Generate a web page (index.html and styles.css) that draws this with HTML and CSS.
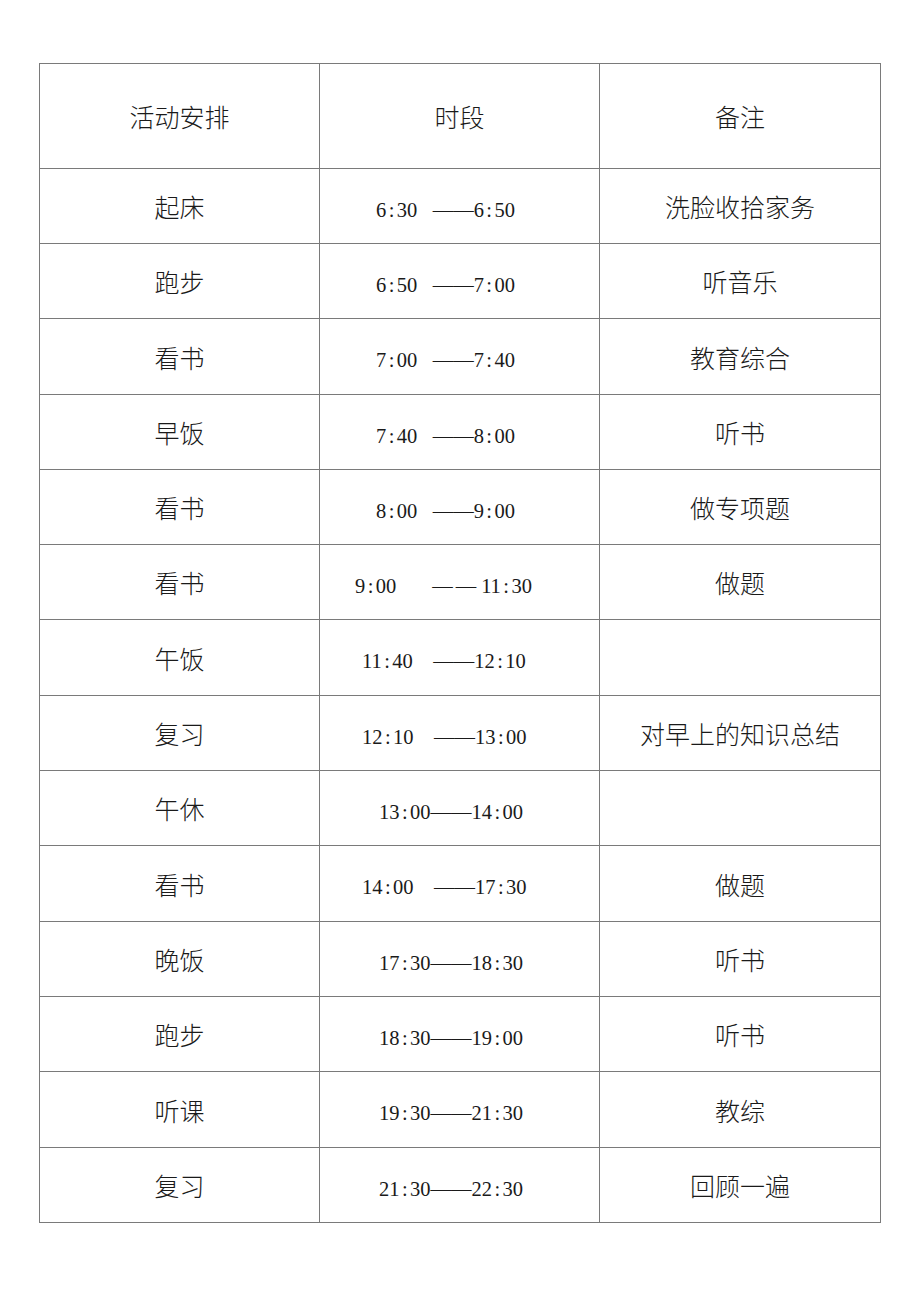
FILE: index.html
```html
<!DOCTYPE html>
<html lang="zh-CN">
<head>
<meta charset="utf-8">
<title>活动安排</title>
<link rel="stylesheet" href="styles.css">
</head>
<body>
<div class="sheet">
  <div class="cell head">活动安排</div>
  <div class="cell head">时段</div>
  <div class="cell head">备注</div>

  <div class="cell">起床</div>
  <div class="cell time pa">6<span class="c">:</span>30   ——6<span class="c">:</span>50</div>
  <div class="cell">洗脸收拾家务</div>

  <div class="cell">跑步</div>
  <div class="cell time pa">6<span class="c">:</span>50   ——7<span class="c">:</span>00</div>
  <div class="cell">听音乐</div>

  <div class="cell">看书</div>
  <div class="cell time pa">7<span class="c">:</span>00   ——7<span class="c">:</span>40</div>
  <div class="cell">教育综合</div>

  <div class="cell">早饭</div>
  <div class="cell time pa">7<span class="c">:</span>40   ——8<span class="c">:</span>00</div>
  <div class="cell">听书</div>

  <div class="cell">看书</div>
  <div class="cell time pa">8<span class="c">:</span>00   ——9<span class="c">:</span>00</div>
  <div class="cell">做专项题</div>

  <div class="cell">看书</div>
  <div class="cell time pd">9<span class="c">:</span>00       <span class="fw">——</span><span class="low">11<span class="c">:</span>30</span></div>
  <div class="cell">做题</div>

  <div class="cell">午饭</div>
  <div class="cell time pb">11<span class="c">:</span>40    ——12<span class="c">:</span>10</div>
  <div class="cell"></div>

  <div class="cell">复习</div>
  <div class="cell time pb">12<span class="c">:</span>10    ——13<span class="c">:</span>00</div>
  <div class="cell">对早上的知识总结</div>

  <div class="cell">午休</div>
  <div class="cell time pc">13<span class="c">:</span>00——14<span class="c">:</span>00</div>
  <div class="cell"></div>

  <div class="cell">看书</div>
  <div class="cell time pb">14<span class="c">:</span>00    ——17<span class="c">:</span>30</div>
  <div class="cell">做题</div>

  <div class="cell">晚饭</div>
  <div class="cell time pc">17<span class="c">:</span>30——18<span class="c">:</span>30</div>
  <div class="cell">听书</div>

  <div class="cell">跑步</div>
  <div class="cell time pc">18<span class="c">:</span>30——19<span class="c">:</span>00</div>
  <div class="cell">听书</div>

  <div class="cell">听课</div>
  <div class="cell time pc">19<span class="c">:</span>30——21<span class="c">:</span>30</div>
  <div class="cell">教综</div>

  <div class="cell">复习</div>
  <div class="cell time pc">21<span class="c">:</span>30——22<span class="c">:</span>30</div>
  <div class="cell">回顾一遍</div>
</div>
</body>
</html>
```

FILE: styles.css
```css
html, body {
  margin: 0;
  padding: 0;
  background: #ffffff;
}

.sheet {
  margin: 63px 0 0 39px;
  display: grid;
  grid-template-columns: 280px 280px 281px;
  grid-template-rows: 105px 75px 75px 76px 75px 75px 75px 76px 75px 75px 76px 75px 75px 76px 75px;
  width: max-content;
  border-left: 1px solid #7a7a7a;
  border-top: 1px solid #7a7a7a;
}

.cell {
  box-sizing: border-box;
  border-right: 1px solid #7a7a7a;
  border-bottom: 1px solid #7a7a7a;
  display: flex;
  align-items: center;
  justify-content: center;
  font-family: "Noto Sans CJK SC", "Noto Sans", sans-serif;
  font-size: 25px;
  font-weight: 300;
  color: #1a1a1a;
  white-space: nowrap;
}

.time {
  justify-content: flex-start;
  white-space: pre;
  font-family: "Liberation Serif", "DejaVu Serif", serif;
  font-size: 20.5px;
  font-weight: 400;
  color: #1a1a1a;
  padding-top: 8px;
}

.time .c {
  display: inline-block;
  width: 10.5px;
  text-align: center;
}

.time .fw {
  letter-spacing: 3px;
  margin-right: 2px;
}

.time .low {
  vertical-align: -2px;
}

.pa { padding-left: 56px; }
.pb { padding-left: 42px; }
.pc { padding-left: 59px; }
.pd { padding-left: 35px; }
```
